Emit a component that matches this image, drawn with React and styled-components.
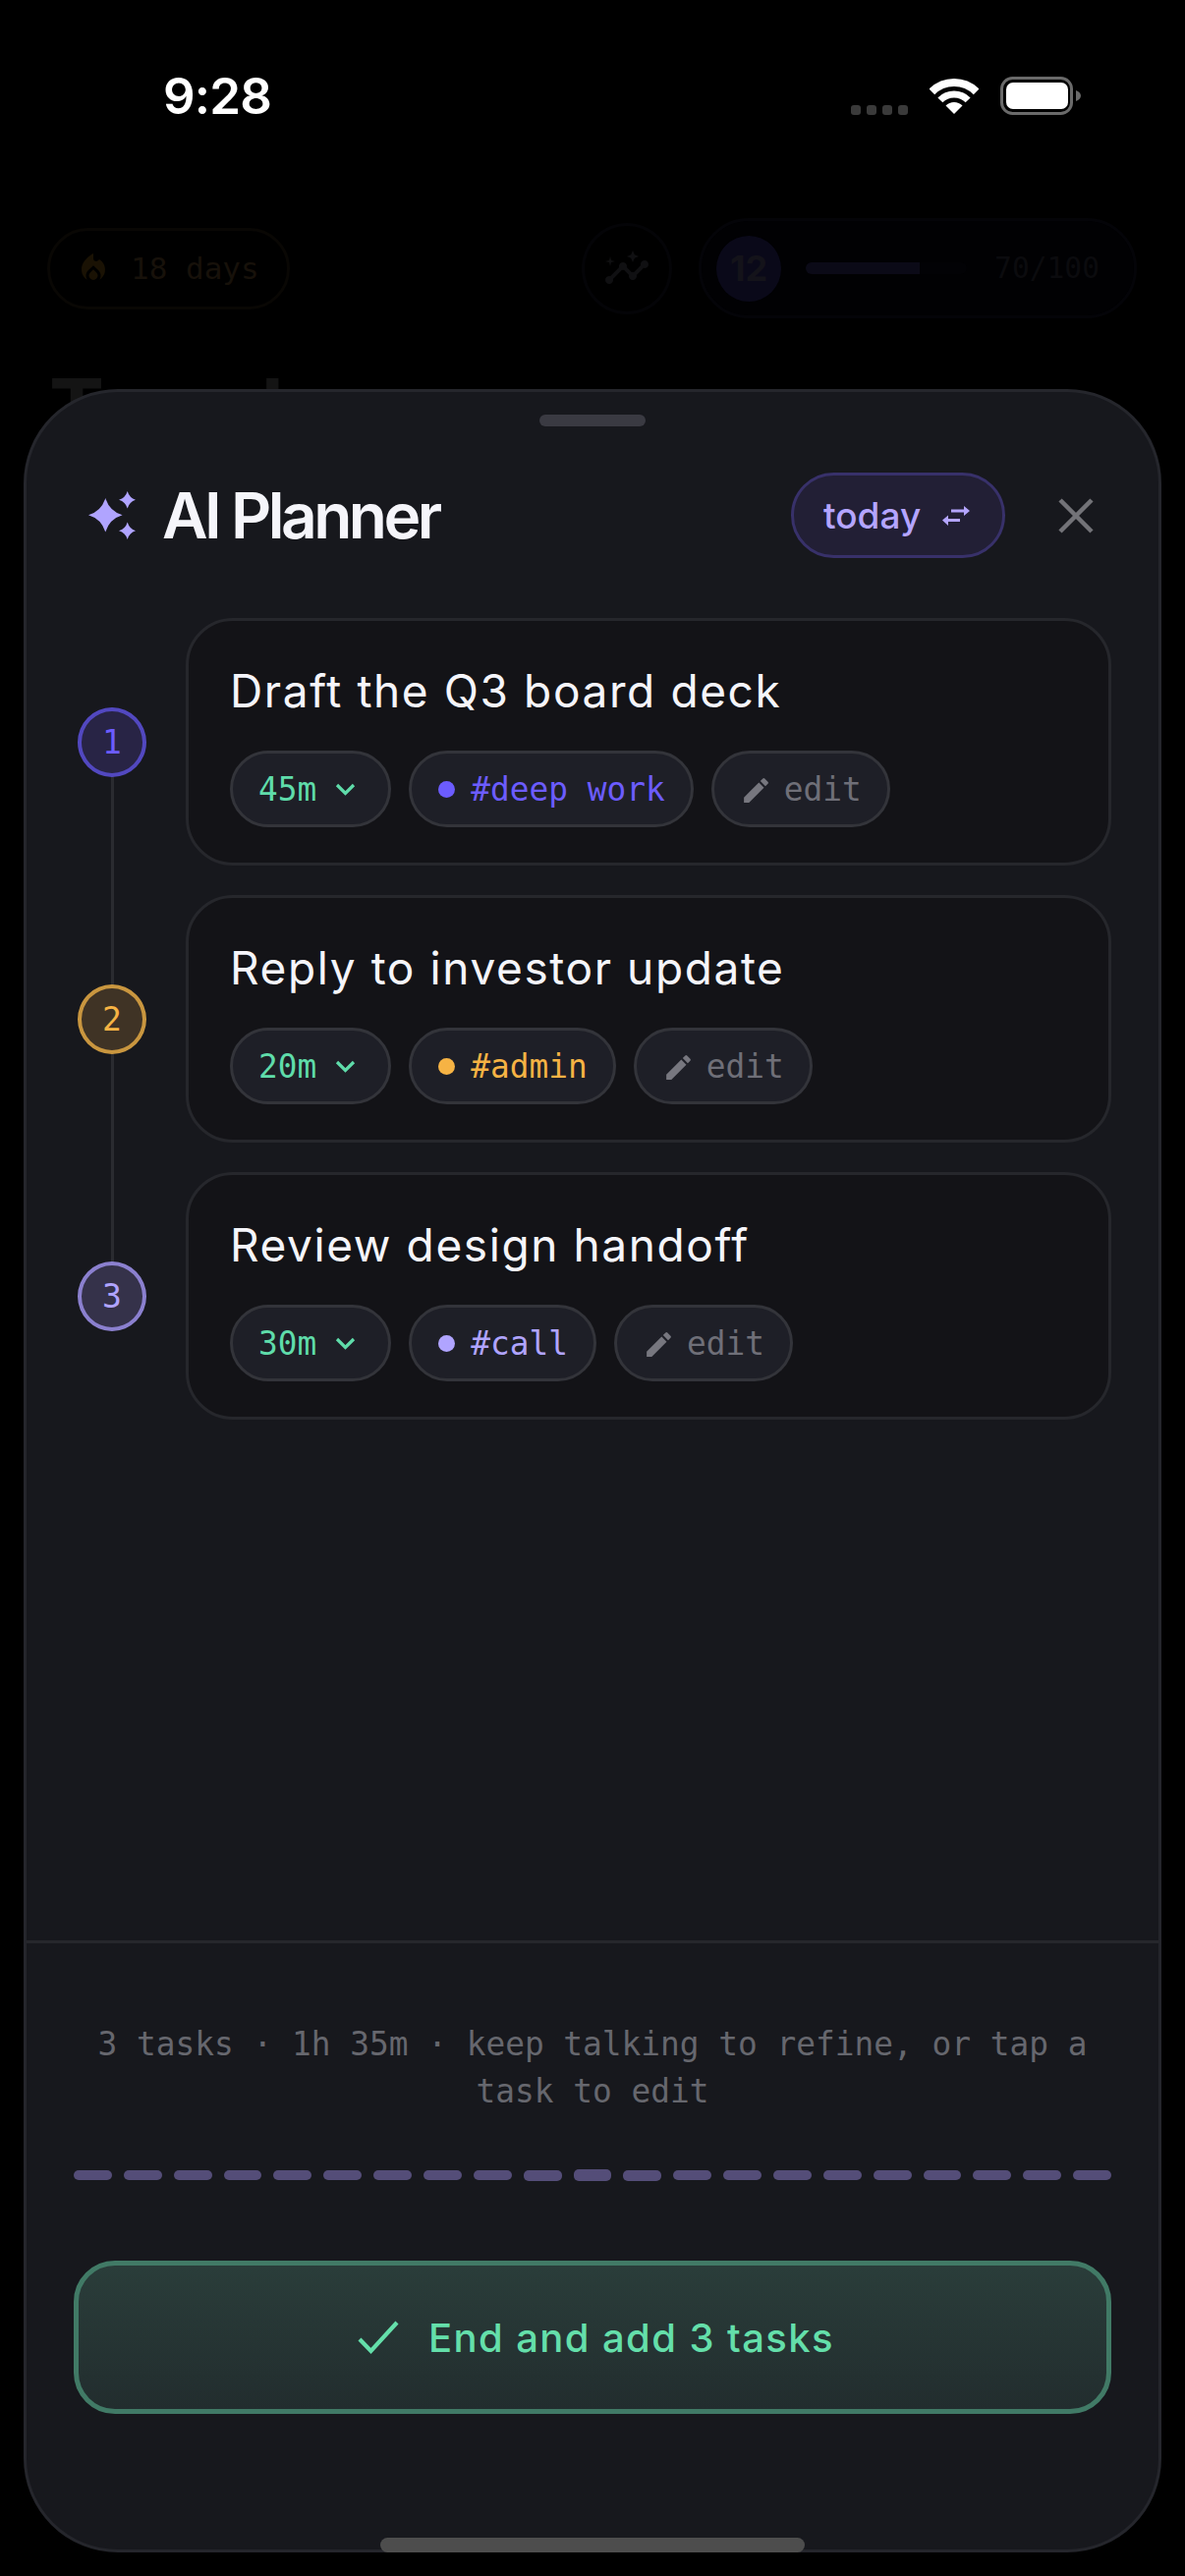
import React from "react"
import styled, { createGlobalStyle } from "styled-components"
import { MdEdit, MdInsights, MdLocalFireDepartment } from "react-icons/md"

const sans = `Inter, "Liberation Sans", sans-serif`
const mono = `"DejaVu Sans Mono", "Liberation Mono", monospace`

const GlobalStyle = createGlobalStyle`
    html,
    body {
        background: #000;
        margin: 0;
        padding: 0;
    }
`

const Page = styled.div`
    background: #000;
    height: 2622px;
    overflow: hidden;
    position: relative;
    width: 1206px;
`

const StatusBar = styled.div`
    align-items: center;
    display: flex;
    height: 195px;
    justify-content: space-between;
    padding: 0 106px 0 166px;
`

const Time = styled.div`
    color: #fff;
    font-family: ${sans};
    font-size: 51px;
    font-weight: 600;
    letter-spacing: -0.8px;
`

const StatusIcons = styled.div`
    align-items: center;
    display: flex;
    gap: 22px;
`

const GhostBar = styled.div`
    align-items: center;
    display: flex;
    height: 102px;
    margin-top: 27px;
    padding: 0 49px 0 48px;
`

const Streak = styled.div`
    align-items: center;
    border: 3px solid #090704;
    border-radius: 42px;
    box-sizing: border-box;
    color: #17110a;
    display: flex;
    font-family: ${mono};
    font-size: 31px;
    gap: 20px;
    height: 83px;
    padding: 0 0 0 26px;
    white-space: nowrap;
    width: 247px;
`

const InsightsButton = styled.div`
    align-items: center;
    border: 3px solid #040407;
    border-radius: 50%;
    box-sizing: border-box;
    color: #101012;
    display: flex;
    height: 93px;
    justify-content: center;
    margin-left: auto;
    width: 92px;
`

const LevelPill = styled.div`
    align-items: center;
    background: #010103;
    border: 3px solid #040408;
    border-radius: 51px;
    box-sizing: border-box;
    display: flex;
    height: 102px;
    margin-left: 27px;
    padding: 0 35px 0 15px;
    width: 446px;
`

const LevelBadge = styled.div`
    align-items: center;
    background: #0a0919;
    border-radius: 50%;
    color: #14131a;
    display: flex;
    font-family: ${sans};
    font-size: 36px;
    font-weight: 700;
    height: 67px;
    justify-content: center;
    width: 66px;
`

const LevelTrack = styled.div`
    background: #020205;
    border-radius: 6px;
    height: 12px;
    margin-left: 25px;
    overflow: hidden;
    width: 164px;
`

const LevelFill = styled.div`
    background: #0b0a17;
    height: 100%;
    width: 71%;
`

const LevelScore = styled.div`
    color: #0b0b0e;
    font-family: ${mono};
    font-size: 29.6px;
    margin-left: auto;
`

const GhostTitle = styled.div`
    color: #141414;
    font-family: ${sans};
    font-size: 84px;
    font-weight: 700;
    line-height: 1;
    margin-top: 50px;
    padding-left: 50px;
`

const Sheet = styled.section`
    background: #17181d;
    border: 3px solid #25262c;
    border-radius: 96px;
    box-sizing: border-box;
    display: flex;
    flex-direction: column;
    height: 2202px;
    left: 24px;
    position: absolute;
    top: 396px;
    width: 1158px;
`

const Handle = styled.div`
    align-self: center;
    background: #3a3a42;
    border-radius: 6px;
    flex: none;
    height: 12px;
    margin-top: 23px;
    width: 108px;
`

const Header = styled.header`
    align-items: center;
    display: flex;
    flex: none;
    gap: 27px;
    height: 87px;
    margin-top: 47px;
    padding: 0 60px 0 63px;
`

const Title = styled.h1`
    color: #f5f5fa;
    font-family: ${sans};
    font-size: 64px;
    font-weight: 600;
    letter-spacing: -3.5px;
    margin: 0;
`

const ScopePill = styled.div`
    align-items: center;
    background: #221f35;
    border: 3px solid #38316a;
    border-radius: 44px;
    box-sizing: border-box;
    color: #b4a5ff;
    display: flex;
    font-family: ${sans};
    font-size: 37px;
    font-weight: 500;
    gap: 22px;
    height: 87px;
    margin-left: auto;
    padding-left: 30px;
    width: 218px;
`

const CloseButton = styled.div`
    display: flex;
    margin-left: 21px;
`

const TaskList = styled.div`
    display: flex;
    flex: 1;
    flex-direction: column;
    gap: 30px;
    margin-top: 61px;
    padding: 0 48px;
`

const TaskRow = styled.div`
    display: flex;
    gap: 36px;
`

const Rail = styled.div`
    align-items: center;
    display: flex;
    flex: none;
    justify-content: center;
    position: relative;
    width: 78px;
`

const Connector = styled.div`
    background: #2a2b30;
    height: 282px;
    left: 37.5px;
    position: absolute;
    top: 50%;
    width: 3px;
`

const StepBadge = styled.div`
    align-items: center;
    background: ${(props) => props.$bg};
    border: 4px solid ${(props) => props.$border};
    border-radius: 50%;
    box-sizing: border-box;
    color: ${(props) => props.$color};
    display: flex;
    font-family: ${mono};
    font-size: 33px;
    height: 71px;
    justify-content: center;
    position: relative;
    width: 70px;
    z-index: 1;
`

const Card = styled.article`
    background: #131317;
    border: 3px solid #26272c;
    border-radius: 48px;
    box-sizing: border-box;
    flex: 1;
    height: 252px;
    padding: 41px 42px 35px;
`

const TaskTitle = styled.div`
    color: #f5f5fa;
    font-family: ${sans};
    font-size: 46px;
    font-weight: 400;
    letter-spacing: 1.6px;
    line-height: 60px;
    margin-bottom: 31px;
`

const ChipRow = styled.div`
    display: flex;
    gap: 18px;
`

const Chip = styled.div`
    align-items: center;
    background: #1e1f27;
    border: 3px solid #33343a;
    border-radius: 39px;
    box-sizing: border-box;
    color: ${(props) => props.$color};
    display: flex;
    font-family: ${mono};
    font-size: 32.8px;
    gap: ${(props) => props.$gap}px;
    height: 78px;
    padding: 2px 26px 0;
`

const Dot = styled.span`
    background: ${(props) => props.$color};
    border-radius: 50%;
    height: 17px;
    margin-bottom: 2px;
    margin-left: 1px;
    width: 17px;
`

const Footer = styled.footer`
    border-top: 3px solid #26272c;
    flex: none;
    padding: 79px 48px 138px;
`

const Caption = styled.p`
    color: #66676e;
    font-family: ${mono};
    font-size: 32.8px;
    line-height: 48px;
    margin: 0;
    text-align: center;
`

const Wave = styled.div`
    align-items: center;
    display: flex;
    gap: 12px;
    height: 12px;
    margin-top: 55px;
`

const WaveBar = styled.div`
    background: #544d78;
    border-radius: 5px;
    flex: 1;
`

const DoneButton = styled.button`
    align-items: center;
    background: linear-gradient(180deg, #2a3d3a, #222d2e);
    border: 5px solid #417a66;
    border-radius: 42px;
    box-sizing: border-box;
    color: #64dfaa;
    display: flex;
    font-family: ${sans};
    font-size: 40px;
    font-weight: 550;
    gap: 25px;
    height: 156px;
    justify-content: center;
    letter-spacing: 1.4px;
    margin-top: 81px;
    padding: 0;
    width: 100%;
`

const HomeIndicator = styled.div`
    background: #4d4d4d;
    border-radius: 8px;
    bottom: 24px;
    height: 15px;
    left: 387px;
    position: absolute;
    width: 432px;
`

const SignalIcon = () => (
    <svg width="58" height="38" viewBox="0 0 58 38" fill="#3a3a3a">
        {[0, 16, 32, 48].map((x) => (
            <rect key={x} x={x} y="28" width="10" height="10" rx="3" />
        ))}
    </svg>
)

const WifiIcon = () => (
    <svg width="50" height="37" viewBox="0 0 50 37" fill="none" stroke="#fff">
        <path d="M25 37 L16.5 28.5 A12 12 0 0 1 33.5 28.5 Z" fill="#fff" stroke="none" />
        <path d="M10.86 22.86 A20 20 0 0 1 39.14 22.86" strokeWidth="7" />
        <path d="M2.37 14.37 A32 32 0 0 1 47.63 14.37" strokeWidth="8" />
    </svg>
)

const BatteryIcon = () => (
    <svg width="82" height="39" viewBox="0 0 82 39">
        <rect x="1.5" y="1.5" width="71" height="36" rx="11" fill="none" stroke="#6a6a6a" strokeWidth="3" />
        <rect x="6" y="6" width="63" height="27" rx="7" fill="#fff" />
        <path d="M77 14 C80 15 82 17 82 19.5 C82 22 80 24 77 25 Z" fill="#6a6a6a" />
    </svg>
)

const SparkleIcon = () => (
    <svg width="48" height="49" viewBox="0 0 48 49" fill="#b0a4ff">
        <path d="M17.3 7 Q21.3 20.3 34.6 24.3 Q21.3 28.3 17.3 41.6 Q13.3 28.3 0 24.3 Q13.3 20.3 17.3 7 Z" />
        <path d="M39.7 0 Q41.7 6.7 48 8.7 Q41.7 10.7 39.7 17.4 Q37.7 10.7 31 8.7 Q37.7 6.7 39.7 0 Z" />
        <path d="M39.7 31.6 Q41.7 38.3 48 40.3 Q41.7 42.3 39.7 49 Q37.7 42.3 31 40.3 Q37.7 38.3 39.7 31.6 Z" />
    </svg>
)

const SwapIcon = () => (
    <svg width="28" height="20" viewBox="0 0 28 20" fill="#b4a5ff" stroke="none">
        <path d="M9 3.6 H22 V0 L28 5 L22 10 V6.6 H9 Z" />
        <path d="M18 13 H6 V9.5 L0 14.5 L6 20 V16 H18 Z" />
    </svg>
)

const CloseIcon = () => (
    <svg width="48" height="48" viewBox="0 0 48 48" stroke="#737378" strokeWidth="4.5">
        <path d="M8 8 L40 40 M40 8 L8 40" />
    </svg>
)

const ChevronIcon = () => (
    <svg width="35" height="24" viewBox="0 0 35 24" fill="none" stroke="#5fdcaa" strokeWidth="3.2">
        <path d="M9 7 L17.5 15.5 L26 7" />
    </svg>
)

const CheckIcon = () => (
    <svg width="54" height="36" viewBox="0 0 54 36" fill="none" stroke="#64dfaa" strokeWidth="4.2">
        <path d="M9 20 L20.5 32 L47 3" />
    </svg>
)

const tasks = [
    {
        title: "Draft the Q3 board deck",
        minutes: "45m",
        tag: "#deep work",
        color: "#6c5cff",
        badgeBg: "#282445",
        badgeBorder: "#5248c0"
    },
    {
        title: "Reply to investor update",
        minutes: "20m",
        tag: "#admin",
        color: "#f6b344",
        badgeBg: "#3f3325",
        badgeBorder: "#c9963f"
    },
    {
        title: "Review design handoff",
        minutes: "30m",
        tag: "#call",
        color: "#b0a4ff",
        badgeBg: "#35324a",
        badgeBorder: "#8b80cf"
    }
]

const waveHeights = [10, 10, 10, 10, 10, 10, 10, 10, 10, 11, 12, 11, 10, 10, 10, 10, 10, 10, 10, 10, 10]

const App = () => {
    return (
        <Page>
            <GlobalStyle />
            <StatusBar>
                <Time>9:28</Time>
                <StatusIcons>
                    <SignalIcon />
                    <WifiIcon />
                    <BatteryIcon />
                </StatusIcons>
            </StatusBar>
            <GhostBar>
                <Streak>
                    <MdLocalFireDepartment size={36} color="#1a1204" />
                    18 days
                </Streak>
                <InsightsButton>
                    <MdInsights size={48} />
                </InsightsButton>
                <LevelPill>
                    <LevelBadge>12</LevelBadge>
                    <LevelTrack>
                        <LevelFill />
                    </LevelTrack>
                    <LevelScore>70/100</LevelScore>
                </LevelPill>
            </GhostBar>
            <GhostTitle>Trends</GhostTitle>
            <Sheet>
                <Handle />
                <Header>
                    <SparkleIcon />
                    <Title>AI Planner</Title>
                    <ScopePill>
                        today
                        <SwapIcon />
                    </ScopePill>
                    <CloseButton>
                        <CloseIcon />
                    </CloseButton>
                </Header>
                <TaskList>
                    {tasks.map((task, index) => (
                        <TaskRow key={task.title}>
                            <Rail>
                                {index < tasks.length - 1 && <Connector />}
                                <StepBadge $bg={task.badgeBg} $border={task.badgeBorder} $color={task.color}>
                                    {index + 1}
                                </StepBadge>
                            </Rail>
                            <Card>
                                <TaskTitle>{task.title}</TaskTitle>
                                <ChipRow>
                                    <Chip $color="#5fdcaa" $gap={12}>
                                        {task.minutes}
                                        <ChevronIcon />
                                    </Chip>
                                    <Chip $color={task.color} $gap={16}>
                                        <Dot $color={task.color} />
                                        {task.tag}
                                    </Chip>
                                    <Chip $color="#6f6f78" $gap={12}>
                                        <MdEdit size={33} color="#77777f" />
                                        edit
                                    </Chip>
                                </ChipRow>
                            </Card>
                        </TaskRow>
                    ))}
                </TaskList>
                <Footer>
                    <Caption>3 tasks · 1h 35m · keep talking to refine, or tap a task to edit</Caption>
                    <Wave>
                        {waveHeights.map((height, index) => (
                            <WaveBar key={index} style={{ height }} />
                        ))}
                    </Wave>
                    <DoneButton>
                        <CheckIcon />
                        End and add 3 tasks
                    </DoneButton>
                </Footer>
            </Sheet>
            <HomeIndicator />
        </Page>
    )
}

export default App
